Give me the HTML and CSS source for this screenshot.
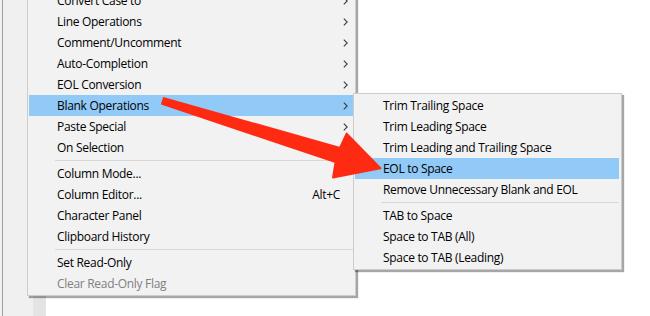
FILE: index.html
```html
<!DOCTYPE html>
<html lang="en">
<head>
    <meta charset="UTF-8">
    <meta name="viewport" content="width=device-width, initial-scale=1.0">
    <title>Edit menu - Blank Operations</title>
    <link rel="stylesheet" href="styles.css">
</head>
<body>
    <div class="window">
        <div class="frame-edge"></div>
        <div class="side-panel"></div>
        <div class="gutter"></div>
        <div class="editor"></div>
    </div>

    <!-- Main context menu -->
    <ul class="menu main-menu">
        <li class="item">Convert Case to<span class="chev"><svg width="5" height="8" viewBox="0 0 5 8"><path d="M0.8 0.6 L4.2 4 L0.8 7.4"/></svg></span></li>
        <li class="item">Line Operations<span class="chev"><svg width="5" height="8" viewBox="0 0 5 8"><path d="M0.8 0.6 L4.2 4 L0.8 7.4"/></svg></span></li>
        <li class="item">Comment/Uncomment<span class="chev"><svg width="5" height="8" viewBox="0 0 5 8"><path d="M0.8 0.6 L4.2 4 L0.8 7.4"/></svg></span></li>
        <li class="item">Auto-Completion<span class="chev"><svg width="5" height="8" viewBox="0 0 5 8"><path d="M0.8 0.6 L4.2 4 L0.8 7.4"/></svg></span></li>
        <li class="item">EOL Conversion<span class="chev"><svg width="5" height="8" viewBox="0 0 5 8"><path d="M0.8 0.6 L4.2 4 L0.8 7.4"/></svg></span></li>
        <li class="item active">Blank Operations<span class="chev"><svg width="5" height="8" viewBox="0 0 5 8"><path d="M0.8 0.6 L4.2 4 L0.8 7.4"/></svg></span></li>
        <li class="item">Paste Special<span class="chev"><svg width="5" height="8" viewBox="0 0 5 8"><path d="M0.8 0.6 L4.2 4 L0.8 7.4"/></svg></span></li>
        <li class="item">On Selection<span class="chev"><svg width="5" height="8" viewBox="0 0 5 8"><path d="M0.8 0.6 L4.2 4 L0.8 7.4"/></svg></span></li>
        <li class="separator"></li>
        <li class="item">Column Mode...</li>
        <li class="item">Column Editor...<span class="shortcut">Alt+C</span></li>
        <li class="item">Character Panel</li>
        <li class="item">Clipboard History</li>
        <li class="separator"></li>
        <li class="item">Set Read-Only</li>
        <li class="item disabled">Clear Read-Only Flag</li>
    </ul>

    <!-- Blank Operations submenu -->
    <ul class="menu sub-menu">
        <li class="item">Trim Trailing Space</li>
        <li class="item">Trim Leading Space</li>
        <li class="item">Trim Leading and Trailing Space</li>
        <li class="item active">EOL to Space</li>
        <li class="item">Remove Unnecessary Blank and EOL</li>
        <li class="separator"></li>
        <li class="item">TAB to Space</li>
        <li class="item">Space to TAB (All)</li>
        <li class="item">Space to TAB (Leading)</li>
    </ul>

    <!-- Callout arrow -->
    <svg class="callout" width="650" height="316" viewBox="0 0 650 316">
        <polygon points="163.9,98.1 340.0,148.0 346.6,133.6 380.4,168.2 333.0,177.6 335.6,162.0 162.1,103.9"/>
    </svg>
</body>
</html>
```

FILE: styles.css
```css
* {
    box-sizing: border-box;
    margin: 0;
    padding: 0;
}

body {
    width: 650px;
    height: 316px;
    overflow: hidden;
    position: relative;
    font-family: 'Segoe UI', 'Open Sans', sans-serif;
    font-size: 12px;
    letter-spacing: -0.3px;
    color: #000;
}

.window {
    display: flex;
    height: 316px;
}

.frame-edge {
    width: 3px;
    background-color: #f0f0f0;
    border-right: 1px solid #a0a0a0;
}

.side-panel {
    width: 30px;
    background-color: #f0f0f0;
}

.gutter {
    width: 13px;
    background-color: #e4e4e4;
}

.editor {
    flex: 1;
    background-color: #fff;
}

/* Menus */
.menu {
    position: absolute;
    list-style: none;
    background-color: #f2f2f2;
    border: 1px solid #cccccc;
    padding: 1px 2px 1px 1px;
    box-shadow: 2px 2px 1px rgba(0, 0, 0, 0.35);
}

.main-menu {
    left: 27px;
    top: -12px;
    width: 329px;
    z-index: 1;
}

.sub-menu {
    left: 353px;
    top: 93px;
    width: 269px;
    z-index: 2;
}

.item {
    display: flex;
    align-items: center;
    height: 21px;
    line-height: 21px;
    padding: 0 5px 0 28px;
    white-space: nowrap;
}

.item.active {
    background-color: #91c9f7;
}

.item.disabled {
    color: #7f7f7f;
}

.chev {
    margin-left: auto;
    display: flex;
}

.chev path {
    fill: none;
    stroke: #3c3c3c;
    stroke-width: 1.1;
}

.shortcut {
    margin-left: auto;
    margin-right: 8px;
}

.separator {
    height: 5px;
    margin-left: 26px;
    display: flex;
    align-items: center;
}

.separator::after {
    content: '';
    flex: 1;
    height: 1px;
    background-color: #d7d7d7;
}

/* Callout arrow */
.callout {
    position: absolute;
    left: 0;
    top: 0;
    z-index: 3;
    pointer-events: none;
}

.callout polygon {
    fill: #ff2a12;
    stroke: #ff2a12;
    stroke-width: 2;
    stroke-linejoin: round;
}
```
